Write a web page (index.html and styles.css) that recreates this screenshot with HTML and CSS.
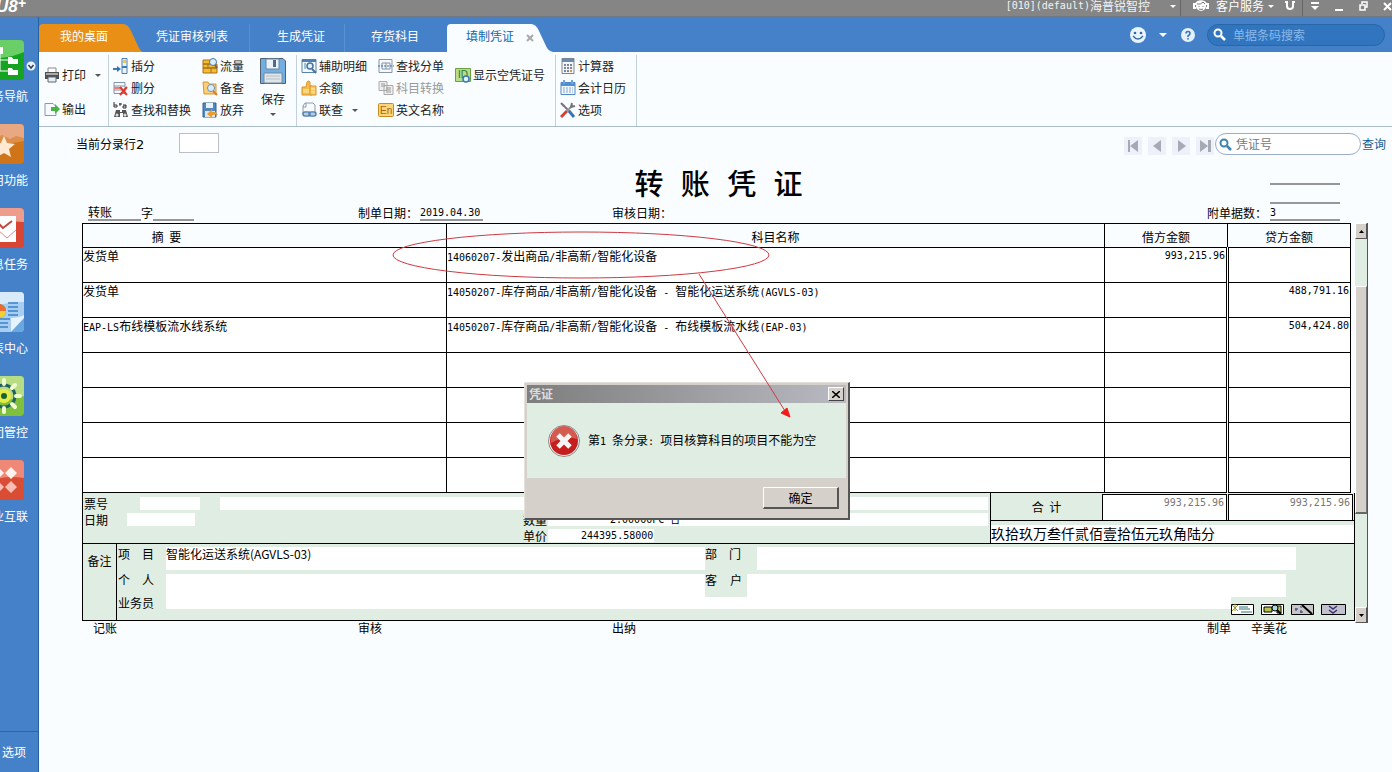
FILE: index.html
```html
<!DOCTYPE html>
<html lang="zh-CN">
<head>
<meta charset="utf-8">
<title>填制凭证</title>
<link rel="stylesheet" href="styles.css">
</head>
<body>
<header class="titlebar">
  <span class="logo">U8<sup>+</sup></span>
  <div class="title-tools">
    <button class="plain account"><span class="m">[010](default)</span>海普锐智控<i class="caret light"></i></button>
    <button class="plain service">
      <svg width="16" height="14" viewBox="0 0 16 14"><path d="M3 6C3 1 13 1 13 6M3 5H1v4h2M13 5h2v4h-2" fill="none" stroke="#fff" stroke-width="2"/><circle cx="8" cy="7" r="5" fill="#fff"/><path d="M4 5q4 1 6-2l2 2M6 7v1M10 7v1M6 10q2 1 4 0" stroke="#777" fill="none"/></svg>
      客户服务<i class="caret light"></i></button>
    <button class="plain magnet" aria-label="工具"><svg width="12" height="12" viewBox="0 0 12 12"><path d="M1 2h3M8 2h3M3 2v4a3 3 0 0 0 6 0V2" fill="none" stroke="#fff" stroke-width="2"/></svg></button>
    <button class="plain win" aria-label="菜单"><svg width="8" height="10" viewBox="0 0 8 10"><path d="M0 1h8v2H0zM0 5h8L4 9z" fill="#fff"/></svg></button>
    <button class="plain win" aria-label="最小化"><svg width="8" height="10" viewBox="0 0 8 10"><path d="M0 8h8v2H0z" fill="#fff"/></svg></button>
    <button class="plain win" aria-label="还原"><svg width="9" height="10" viewBox="0 0 9 10"><path d="M3 3V1h5v5H6M1 4h5v5H1z" fill="none" stroke="#fff" stroke-width="1.5"/></svg></button>
    <button class="plain win last" aria-label="关闭"><svg width="9" height="10" viewBox="0 0 9 10"><path d="M1 2l7 7M8 2L1 9" stroke="#fff" stroke-width="2"/></svg></button>
  </div>
</header>
<div class="shell">
  <nav class="sidebar">
    <div class="side-list">
      <a href="#nav"><svg width="40" height="40" viewBox="0 0 40 40"><rect width="40" height="40" rx="4" fill="#16a321"/><path d="M0 4q0-4 4-4h32q4 0 4 4v8Q22 20 0 18z" fill="#69cf66"/><path d="M16 20h8M16 31h8M16 12v19" stroke="#fff" fill="none"/><path d="M9 7h10v7H9zM24 17h4l1 2h5v5H24zM24 28h4l1 2h5v5H24z" fill="#fff"/></svg>业务导航</a>
      <a href="#fav"><svg width="40" height="40" viewBox="0 0 40 40"><rect width="40" height="40" rx="4" fill="#cf7419"/><path d="M0 4q0-4 4-4h32q4 0 4 4v11l-8-2-6 3-8-4-18 9z" fill="#e9a782"/><path d="M0 22q20-1 40-5v-3l-8-2-6 3-8-4-18 7z" fill="#dc8f4a"/><path d="M20 12l3 7 8 1-6 5 2 8-7-4-7 4 2-8-6-5 8-1z" fill="#ffe9d2"/></svg>常用功能</a>
      <a href="#task"><svg width="40" height="40" viewBox="0 0 40 40"><rect width="40" height="40" rx="4" fill="#d94533"/><path d="M0 4q0-4 4-4h32q4 0 4 4v10Q20 12 0 20z" fill="#ee9c8c"/><path d="M4 8h28v14H4zM14 22h18v12H14z" fill="#fff"/><path d="M15 16l4 4 9-7" fill="none" stroke="#c4473c" stroke-width="2"/><path d="M14 22l9 8 9-8" fill="none" stroke="#d58e88"/></svg>消息任务</a>
      <a href="#report"><svg width="40" height="40" viewBox="0 0 40 40"><rect width="40" height="40" rx="4" fill="#a7cdf0"/><path d="M0 4q0-4 4-4h32q4 0 4 4v6Q20 9 0 18z" fill="#d9ebfb"/><path d="M24 11h10M24 15h10M24 19h10M24 23h10M4 27h22M4 31h20M4 35h20" stroke="#3d83c9" stroke-width="1.5"/><circle cx="15" cy="19" r="7" fill="#4aae4d"/><path d="M15 19v-7a7 7 0 0 1 7 7z" fill="#eb6b31"/><path d="M15 19h7a7 7 0 0 1-7 7z" fill="#f1cf37"/><path d="M27 40V26h13v10q0 4-4 4z" fill="#6ba7df"/><path d="M27 40l13-14v-3q-2 2-13 3z" fill="#e6f2fc"/></svg>报表中心</a>
      <a href="#group"><svg width="40" height="40" viewBox="0 0 40 40"><rect width="40" height="40" rx="4" fill="#7fc13d"/><path d="M0 4q0-4 4-4h32q4 0 4 4v16L0 30z" fill="#b7dc84"/><circle cx="20" cy="20" r="11" fill="none" stroke="#235f5f" stroke-width="3"/><g stroke="#effad0" stroke-width="4" stroke-linecap="round"><path d="M20 4v4M20 32v4M4 20h4M32 20h4M9 9l3 3M28 28l3 3M31 9l-3 3M9 31l3-3"/></g><circle cx="20" cy="20" r="7" fill="#e5ec44"/><circle cx="20" cy="20" r="3" fill="#17643a"/></svg>集团管控</a>
      <a href="#link"><svg width="40" height="40" viewBox="0 0 40 40"><rect width="40" height="40" rx="4" fill="#d94d35"/><path d="M0 4q0-4 4-4h32q4 0 4 4v14Q15 14 0 26z" fill="#ef8877"/><path d="M14 7l6 6-6 6-6-6zM27 7l6 6-6 6-6-6z" fill="#fff1ee"/><path d="M14 21l6 6-6 6-6-6zM27 21l6 6-6 6-6-6z" fill="#f9bdb3"/></svg>企业互联</a>
    </div>
    <button class="plain side-toggle" aria-label="展开"><svg width="10" height="10" viewBox="0 0 10 10"><circle cx="5" cy="5" r="4.5" fill="#eaf2fc"/><path d="M2.500 4L5 7l2.500-3" fill="none" stroke="#245" stroke-width="1.500"/></svg></button>
    <a class="side-options" href="#options">选项</a>
  </nav>
  <main class="main">
    <div class="tabbar">
      <nav class="tabs">
        <a class="tab desk" href="#desk"><svg class="tab-shape" viewBox="0 0 104 28" preserveAspectRatio="none"><path d="M0 28V4q0-4 4-4h80q5 0 8 7l7 15q2 5 5 6z" fill="#e98f15"/></svg><span>我的桌面</span></a>
        <a class="tab audit" href="#audit">凭证审核列表</a>
        <a class="tab make" href="#make">生成凭证</a>
        <a class="tab stock" href="#stock">存货科目</a>
        <a class="tab active" href="#fill"><svg class="tab-shape" viewBox="0 0 106 28" preserveAspectRatio="none"><path d="M0 28V4q0-4 4-4h80q5 0 8 7l7 15q2 5 7 6z" fill="#fafdff"/></svg><span>填制凭证</span><svg class="tab-close" width="8" height="8" viewBox="0 0 8 8"><path d="M1 1l6 6M7 1L1 7" stroke="#a9a9a9" stroke-width="2"/></svg></a>
      </nav>
      <div class="tab-tools">
        <button class="plain" aria-label="表情"><svg width="16" height="16" viewBox="0 0 16 16"><circle cx="8" cy="8" r="8" fill="#e9f5fc"/><circle cx="5" cy="6" r="1.300" fill="#3167a5"/><circle cx="11" cy="6" r="1.300" fill="#3167a5"/><path d="M3 9q5 6 10 0" fill="none" stroke="#3167a5" stroke-width="1.300"/></svg></button>
        <i class="caret big"></i>
        <button class="plain help" aria-label="帮助"><svg width="14" height="14" viewBox="0 0 14 14"><circle cx="7" cy="7" r="7" fill="#e4f0fc"/><path d="M5 5.500q0-2 2-2t2 2q0 1-2 2.500V9M7 10v1.500" fill="none" stroke="#3973b5" stroke-width="1.600"/></svg></button>
        <label class="pill"><svg width="13" height="13" viewBox="0 0 13 13"><circle cx="5" cy="5" r="3.500" fill="none" stroke="#fff" stroke-width="2"/><path d="M8 8l4 4" stroke="#fff" stroke-width="2.500"/></svg><input type="text" placeholder="单据条码搜索" aria-label="单据条码搜索"></label>
      </div>
    </div>
    <div class="ribbon">
      <div class="group g-print">
        <button class="cmd"><svg width="16" height="16" viewBox="0 0 16 16"><path d="M4 1h8v5H4z" fill="#fff" stroke="#888"/><path d="M1 5h14v7H1z" fill="#4e5053"/><path d="M2 6h12v2H2z" fill="#aaa"/><path d="M4 10h8v5H4z" fill="#e5edf8" stroke="#666"/></svg>打印<i class="caret"></i></button>
        <button class="cmd"><svg width="16" height="16" viewBox="0 0 16 16"><path d="M1 2.500h8l3 3v9H1z" fill="#f7fafc" stroke="#8a98a8"/><path d="M7 6h4V3l5 5-5 5v-3H7z" fill="#48b448"/></svg>输出</button>
      </div>
      <div class="group g-edit">
        <div class="stack">
          <button class="cmd"><svg width="16" height="16" viewBox="0 0 16 16"><path d="M9 .5h5v15H9z" fill="#eaf3fb" stroke="#4a7eaf"/><path d="M10 2h3v3h-3z" fill="#f2c04e"/><path d="M9 9h5M0 11h4" stroke="#3c79b6" stroke-width="2"/><path d="M4 8l4 3-4 3z" fill="#2e74bb"/></svg>插分</button>
          <button class="cmd"><svg width="16" height="16" viewBox="0 0 16 16"><path d="M1 2.500h11v11H1zM1 6h11M1 10h11" fill="#f5f8fb" stroke="#8195ab"/><path d="M1 7h8v2H1z" fill="#e88072"/><path d="M7 7l7 8M14 7l-7 8" stroke="#df392f" stroke-width="2"/></svg>删分</button>
          <button class="cmd"><svg width="16" height="16" viewBox="0 0 16 16"><path d="M1 0v5h3V3H1M10 3h3v3h-3V4h3M6 2h3M7 1v3" fill="none" stroke="#333"/><path d="M3 8h4v2h2V8h4l2 7h-5v-4H7v4H1z" fill="#555"/><circle cx="4" cy="13" r="1.500" fill="#ddd"/><circle cx="12" cy="13" r="1.500" fill="#ddd"/></svg>查找和替换</button>
        </div>
        <div class="stack second">
          <button class="cmd"><svg width="16" height="16" viewBox="0 0 16 16"><path d="M1 2h7v4H1zM1 6h14v4H1zM1 10h14v5H1zM6 6v4M9 10v5" fill="#f4bc31" stroke="#a56e18"/><circle cx="11" cy="4" r="3.500" fill="#d9efff" stroke="#51769b"/><path d="M13 7l2 3" stroke="#666" stroke-width="2"/></svg>流量</button>
          <button class="cmd"><svg width="16" height="16" viewBox="0 0 16 16"><path d="M1 2h5l1 2h7v10H2z" fill="#f9cf78" stroke="#d99632"/><circle cx="9" cy="8" r="3.500" fill="#dceefc" stroke="#6991bd"/><path d="M11 11l4 4" stroke="#db7d28" stroke-width="2"/></svg>备查</button>
          <button class="cmd"><svg width="16" height="16" viewBox="0 0 16 16"><path d="M1 1h13v14H1z" fill="#5287c0" stroke="#346294"/><path d="M4 1h7v5H4z" fill="#eaf1f8"/><path d="M3 9h10v6H3z" fill="#dce7f2"/><path d="M16 13q-2-4-6-3V7l-5 5 5 4v-3q4-1 6 0z" fill="#ed9c29"/></svg>放弃</button>
        </div>
        <button class="save"><svg width="28" height="28" viewBox="0 0 28 28"><path d="M1.500 1.500H24l2.500 2.500v22.500h-25z" fill="#72aee0" stroke="#50606f"/><path d="M7 2h13v10H7z" fill="#edf2f6" stroke="#6787a8"/><path d="M14 3h3v7h-3z" fill="#4c6c8b"/><path d="M5 16h18v10H5z" fill="#e0e5ea" stroke="#75899e"/><path d="M7 19h14M7 22h14" stroke="#b6bfc8"/></svg>保存<i class="caret"></i></button>
      </div>
      <div class="group g-query">
        <div class="stack">
          <button class="cmd"><svg width="16" height="16" viewBox="0 0 16 16"><path d="M1 1.500h14v13H1z" fill="#f4f8fc" stroke="#5b82aa"/><path d="M1 1h14v3H1z" fill="#4c81b8"/><path d="M3 6h2M3 8h2M3 10h2" stroke="#58a"/><circle cx="9" cy="8" r="3" fill="#def" stroke="#47739e" stroke-width="1.500"/><path d="M11 11l4 4" stroke="#47739e" stroke-width="2"/></svg>辅助明细</button>
          <button class="cmd"><svg width="16" height="16" viewBox="0 0 16 16"><path d="M6 2q2-2 3 0v4h2v9H1V7h4z" fill="#f5bd47" stroke="#dc9428"/><path d="M9 6h6v9H9z" fill="#fac85c" stroke="#dc9428"/><path d="M2 10h6M2 12h6M10 9h4M10 12h4" stroke="#fff0ba"/></svg>余额</button>
          <button class="cmd"><svg width="16" height="16" viewBox="0 0 16 16"><path d="M4 1h8l2 2v9H2V4z" fill="#f8fafb" stroke="#8b9cac"/><path d="M5 1v4H2" fill="none" stroke="#8b9cac"/><rect x="2" y="10" width="7" height="4" rx="2" fill="none" stroke="#4f83b7" stroke-width="1.500"/><rect x="8" y="10" width="7" height="4" rx="2" fill="none" stroke="#4f83b7" stroke-width="1.500"/></svg>联查<i class="caret"></i></button>
        </div>
        <div class="stack third">
          <button class="cmd"><svg width="16" height="16" viewBox="0 0 16 16"><path d="M1 1.500h13v13H1z" fill="#f6f8fa" stroke="#8797a7"/><path d="M4 5h8v6H4zM8 5v6" fill="none" stroke="#8394a5"/><path d="M0 8h16" stroke="#3873ab" stroke-dasharray="2 1"/></svg>查找分单</button>
          <button class="cmd" disabled><svg width="16" height="16" viewBox="0 0 16 16"><path d="M1 1.500h8v9H1zM6 5.500h9v9H6z" fill="#eee" stroke="#aaa"/><path d="M3 4h4M3 6h4M8 8h5M8 10h5M8 12h5" stroke="#999"/></svg>科目转换</button>
          <button class="cmd"><svg width="16" height="16" viewBox="0 0 16 16"><rect x=".5" y="1.500" width="15" height="13" rx="1" fill="#f9d678" stroke="#ca8a24"/><text x="2" y="12" class="en">En</text></svg>英文名称</button>
        </div>
        <button class="cmd number"><svg width="16" height="16" viewBox="0 0 16 16"><path d="M.5 1.500h15v13H.5z" fill="#b5df88" stroke="#67a346"/><text x="3" y="11" class="id">ID</text><circle cx="11" cy="12" r="3" fill="#e5f4ff" stroke="#367ab4" stroke-width="1.500"/></svg>显示空凭证号</button>
      </div>
      <div class="group g-tools">
        <div class="stack">
          <button class="cmd"><svg width="16" height="16" viewBox="0 0 16 16"><path d="M2 .5h12v15H2z" fill="#f4f5f6" stroke="#7b858f"/><path d="M2 1h12v3H2z" fill="#648cb4"/><path d="M4 7h2M7 7h2M10 7h2M4 10h2M7 10h2M10 10h2M4 13h2M7 13h2" stroke="#788797" stroke-width="2"/><path d="M10 13h2" stroke="#e78f3c" stroke-width="2"/></svg>计算器</button>
          <button class="cmd"><svg width="16" height="16" viewBox="0 0 16 16"><path d="M1 2.500h14v12H1z" fill="#f3f8fd" stroke="#5089c3"/><path d="M1 3h14v3H1z" fill="#4c90d5"/><path d="M4 0v4M12 0v4" stroke="#6aa6df" stroke-width="2"/><path d="M3 8h10M3 10h10M3 12h10" stroke="#81a9ce" stroke-dasharray="2 1"/></svg>会计日历</button>
          <button class="cmd"><svg width="16" height="16" viewBox="0 0 16 16"><path d="M3 3l7 7" stroke="#777" stroke-width="2"/><path d="M9 9l5 6" stroke="#3677b4" stroke-width="3"/><path d="M13 3L7 9" stroke="#999" stroke-width="2"/><path d="M7 9l-6 6" stroke="#cf4235" stroke-width="3"/><path d="M1 1l3 3M12 1l-1 4 4-1" stroke="#777" stroke-width="2" fill="none"/></svg>选项</button>
        </div>
      </div>
    </div>
    <section class="work">
      <div class="finder">
        <label for="line">当前分录行<span class="line-no">2</span></label>
        <input id="line" class="line-box" type="text">
        <div class="pager">
          <button aria-label="首张"><svg width="14" height="12" viewBox="0 0 14 12"><path d="M2 0h2v12H2zM12 0v12L4 6z" fill="#a6aab4"/></svg></button>
          <button aria-label="上张"><svg width="14" height="12" viewBox="0 0 14 12"><path d="M11 0v12L3 6z" fill="#a6aab4"/></svg></button>
          <button aria-label="下张"><svg width="14" height="12" viewBox="0 0 14 12"><path d="M4 0v12l8-6z" fill="#a6aab4"/></svg></button>
          <button aria-label="末张"><svg width="14" height="12" viewBox="0 0 14 12"><path d="M10 0h3v12h-3zM2 0v12l8-6z" fill="#a6aab4"/></svg></button>
        </div>
        <div class="find"><svg width="13" height="13" viewBox="0 0 13 13"><circle cx="5" cy="5" r="3.500" fill="none" stroke="#3f84ad" stroke-width="2"/><path d="M8 8l4 4" stroke="#3f84ad" stroke-width="2.500"/></svg><input type="text" placeholder="凭证号" aria-label="凭证号"></div>
        <a class="go" href="#find">查询</a>
      </div>
      <div class="heading">
        <h1>转 账 凭 证</h1>
        <div class="rules"><span></span><span></span></div>
      </div>
      <div class="meta">
        <div class="word"><input value="转账" aria-label="凭证字">字<input class="no" aria-label="凭证编号"></div>
        <label>制单日期：<input class="date m" value="2019.04.30"></label>
        <span>审核日期：</span>
        <label>附单据数：<input class="count m" value="3"></label>
      </div>
      <div class="voucher">
        <div class="sheet">
          <table>
            <colgroup><col class="c-sum"><col><col class="c-amt"><col class="c-amt"></colgroup>
            <thead><tr><th class="sum">摘&nbsp; 要</th><th>科目名称</th><th>借方金额</th><th>贷方金额</th></tr></thead>
            <tbody>
              <tr><td>发货单</td><td><span class="m">14060207-</span>发出商品<span class="m">/</span>非高新<span class="m">/</span>智能化设备</td><td class="m amt">993,215.96</td><td></td></tr>
              <tr><td>发货单</td><td><span class="m">14050207-</span>库存商品<span class="m">/</span>非高新<span class="m">/</span>智能化设备<span class="m"> - </span>智能化运送系统<span class="m">(AGVLS-03)</span></td><td></td><td class="m amt">488,791.16</td></tr>
              <tr><td><span class="m">EAP-LS</span>布线模板流水线系统</td><td><span class="m">14050207-</span>库存商品<span class="m">/</span>非高新<span class="m">/</span>智能化设备<span class="m"> - </span>布线模板流水线<span class="m">(EAP-03)</span></td><td></td><td class="m amt">504,424.80</td></tr>
              <tr><td></td><td></td><td></td><td></td></tr>
              <tr><td></td><td></td><td></td><td></td></tr>
              <tr><td></td><td></td><td></td><td></td></tr>
              <tr><td></td><td></td><td></td><td></td></tr>
            </tbody>
          </table>
          <div class="foot">
            <div class="detail">
              <div class="d-row"><label for="bill">票号</label><input id="bill" class="bill"><input class="wide" aria-label="票据说明"></div>
              <div class="d-row"><label for="day">日期</label><input id="day" class="day"><label class="qty-label" for="qty">数量</label><input id="qty" class="qty wide m" value="2.00000PC 台"></div>
              <div class="d-row"><label class="price-label" for="price">单价</label><input id="price" class="price m" value="244395.58000"></div>
            </div>
            <div class="totals">
              <div class="total-row"><span class="total-label">合&nbsp; 计</span><output class="m">993,215.96</output><output class="m">993,215.96</output></div>
              <div class="words">玖拾玖万叁仟贰佰壹拾伍元玖角陆分</div>
            </div>
          </div>
          <div class="notes">
            <div class="notes-title">备注</div>
            <div class="notes-body">
              <div class="n-row top"><label for="proj">项<span>目</span></label><input id="proj" value="智能化运送系统(AGVLS-03)"><label class="dept" for="dept">部<span>门</span></label><input id="dept"></div>
              <div class="n-row mid"><label for="person">个<span>人</span></label><input id="person"><label class="cust" for="cust">客<span>户</span></label><input id="cust"></div>
              <div class="n-row end"><label for="sales">业务员</label><input id="sales">
                <div class="mini">
                  <button aria-label="单据"><svg width="23" height="11" viewBox="0 0 23 11"><path d="M.5.5h22v10H.5z" fill="#fff" stroke="#000"/><path d="M8 3h9M8 5h11M10 8h11" stroke="#287575"/><path d="M1 1l6 6M7 1L1 7M4 0v7" stroke="#a79534"/></svg></button>
                  <button aria-label="查看"><svg width="23" height="11" viewBox="0 0 23 11"><path d="M.5.5h22v10H.5z" fill="#fff" stroke="#000"/><path d="M3 3h8v5H3zM16 2h4v7h-4z" fill="#b6c447" stroke="#000"/><circle cx="14" cy="4" r="3" fill="#a7d9e4" stroke="#000"/><path d="M16 6l4 4" stroke="#000" stroke-width="2"/></svg></button>
                  <button aria-label="编辑"><svg width="23" height="11" viewBox="0 0 23 11"><path d="M.5.5h22v10H.5z" fill="#c9c5c7" stroke="#000"/><path d="M11 1l10 9" stroke="#000" stroke-width="2"/><path d="M4 5h3M5 4v3M9 8h3M10 6v3M9 3h2" stroke="#347"/></svg></button>
                  <button aria-label="展开"><svg width="25" height="11" viewBox="0 0 25 11"><path d="M.5.5h24v10H.5z" fill="#c4c1cf" stroke="#000"/><path d="M8 2l4 3 4-3M8 6l4 3 4-3" fill="none" stroke="#36366e" stroke-width="1.500"/></svg></button>
                </div>
              </div>
            </div>
          </div>
        </div>
        <div class="scroll">
          <button aria-label="向上"><svg width="5" height="3" viewBox="0 0 5 3"><path d="M0 3L2.500 0 5 3z"/></svg></button>
          <div class="track"><div class="thumb"></div></div>
          <button aria-label="向下"><svg width="5" height="3" viewBox="0 0 5 3"><path d="M0 0l2.500 3L5 0z"/></svg></button>
        </div>
        <div class="dialog" role="alertdialog" aria-labelledby="dlg">
          <div class="dlg-bar"><span id="dlg">凭证</span><button aria-label="关闭"><svg width="8" height="7" viewBox="0 0 8 7"><path d="M0 0l8 7M8 0L0 7" stroke="#000" stroke-width="1.500"/></svg></button></div>
          <div class="dlg-body">
            <svg width="32" height="32" viewBox="0 0 32 32"><circle cx="16" cy="16" r="15.500" fill="#f7f7f7" stroke="#888"/><circle cx="16" cy="16" r="14" fill="#c51e1d"/><path d="M3 14a13 13 0 0 1 26 0Q16 10 3 18z" fill="#d55a50"/><path d="M10 10l12 12M22 10L10 22" stroke="#f5f5f5" stroke-width="5"/></svg>
            <span>第<span class="m">1 </span>条分录<span class="m">: </span>项目核算科目的项目不能为空</span>
          </div>
          <div class="dlg-foot"><button>确定</button></div>
        </div>
        <svg class="mark" width="400" height="200" viewBox="0 0 400 200"><ellipse cx="190" cy="25" rx="188" ry="23" fill="none" stroke="#ce3a41"/><path d="M308 44l86 137" stroke="#ce3a41"/><path d="M399 187l-9-4 6-5z" fill="#f01c1c" stroke="#f01c1c"/></svg>
      </div>
      <div class="signs"><span class="book">记账</span><span>审核</span><span>出纳</span><span class="maker">制单<span>辛美花</span></span></div>
    </section>
  </main>
</div>
</body>
</html>
```
FILE: styles.css
```css
* { box-sizing: border-box; }
body {
  margin: 0;
  min-height: 100vh;
  display: flex;
  flex-direction: column;
  overflow: hidden;
  font: 12px/16px "Noto Sans CJK SC", sans-serif;
  color: #000;
  background: #fafdff;
}
button, input { font: inherit; color: inherit; padding: 0; border: 0; border-radius: 0; background: none; min-width: 0; }
a { color: inherit; text-decoration: none; }
svg { display: block; flex: none; }
.m { font-family: "DejaVu Sans Mono", "Noto Sans CJK SC", monospace; font-size: 10px; white-space: pre; }
.caret { width: 0; height: 0; border: 3px solid transparent; border-top-color: #555; border-bottom: 0; }
.caret.light { border-top-color: #fff; }
.caret.big { border: 4px solid transparent; border-top-color: #fff; border-bottom: 0; }
.plain { display: flex; align-items: center; }

/* window title */
.titlebar { display: flex; justify-content: space-between; height: 17px; flex: none; overflow: hidden; background: #858585; border-bottom: 1px solid #6d7884; color: #fff; }
.logo { font: italic bold 17px/14px "Liberation Sans", sans-serif; margin-left: -4px; }
.logo sup { font-size: 14px; line-height: 1px; vertical-align: 4px; }
.title-tools { display: flex; line-height: 12px; }
.title-tools button { height: 12px; }
.account { color: #f4f4f4; }
.account .caret { margin-left: 20px; }
.title-tools .service { margin-left: 4px; padding-left: 12px; gap: 7px; height: 17px; padding-bottom: 5px; border-left: 1px solid #666; }
.service .caret { margin-left: -3px; }
.title-tools .magnet { margin-left: 10px; padding-right: 6px; height: 17px; padding-bottom: 5px; border-right: 1px solid #666; }
.win { margin-left: 8px; width: 16px; }
.win.last { width: 9px; margin-left: 8px; }

.shell { display: flex; flex: 1; }
.sidebar { position: relative; display: flex; flex-direction: column; justify-content: space-between; width: 39px; flex: none; overflow: hidden; background: #4581c9; border-right: 1px solid #2461a2; color: #fff; }
.side-list { display: flex; flex-direction: column; gap: 20px; width: 48px; margin: 23px 0 0 -21px; }
.side-list a { display: flex; flex-direction: column; align-items: center; gap: 8px; margin-right: -2px; white-space: nowrap; }
.side-toggle { position: absolute; left: 26px; top: 44px; }
.side-options { height: 41px; padding: 12px 2px; border-top: 1px solid #2f659f; }

.main { flex: 1; min-width: 0; }
.tabbar { display: flex; justify-content: space-between; height: 35px; padding-top: 7px; background: #4581c9; color: #fff; }
.tabs { display: flex; height: 28px; line-height: 24px; }
.tab { position: relative; white-space: nowrap; }
.tab-shape { position: absolute; left: 0; top: 0; width: 100%; height: 100%; }
.tab > span { position: relative; }
.desk { padding: 0 35px 0 21px; }
.audit { padding: 0 21px 0 13px; border-right: 1px solid #5990d2; }
.make { padding: 0 19px 0 27px; border-right: 1px solid #5990d2; }
.stock { padding: 0 28px 0 26px; }
.active { display: flex; align-items: center; gap: 12px; padding: 0 19px; color: #1766ab; }
.active > span { align-self: flex-start; }
.tab-close { position: relative; }
.tab-tools { display: flex; align-items: center; height: 21px; padding-right: 7px; }
.tab-tools .big { margin: 0 14px 0 13px; }
.help { margin-right: 12px; }
.pill { display: flex; align-items: center; gap: 7px; width: 178px; height: 22px; padding: 0 6px 0 5px; border-radius: 11px; background: #3275bf; border: 1px solid #2866a8; }
.pill input { flex: 1; }
.pill input::placeholder { color: #8ab9e9; opacity: 1; }

/* ribbon */
.ribbon { display: flex; height: 75px; border-bottom: 1px solid #a9bacb; padding-top: 3px; }
.group { display: flex; border-right: 1px solid #c3d0dd; padding-left: 4px; }
.cmd { display: flex; align-items: center; gap: 2px; height: 22px; white-space: nowrap; color: #222; }
.cmd:disabled { color: #999; }
.stack { display: flex; flex-direction: column; }
.g-print { flex-direction: column; gap: 12px; width: 70px; padding: 9px 0 0 5px; }
.g-print .caret { margin-left: 7px; }
.g-edit { width: 188px; }
.second { margin-left: 11px; }
.save { display: flex; flex-direction: column; align-items: center; gap: 6px; margin: 2px 0 0 15px; height: 61px; color: #222; }
.g-query { width: 259px; }
.g-query .caret { margin-left: 7px; }
.third { margin-left: 11px; }
.number { margin: 9px 0 0 11px; }
.g-tools { width: 81px; }
.en, .id { font: 10px "Liberation Sans", sans-serif; fill: #a96318; }
.id { fill: #35743a; }

/* voucher search */
.work { padding: 0 24px 0 43px; }
.finder { display: flex; align-items: center; height: 34px; margin: 0 -20px 0 -6px; padding-right: 2px; }
.line-no { font: 13px "DejaVu Sans", sans-serif; }
.line-box { width: 40px; height: 20px; margin: 0 auto 2px 35px; background: #fff; border: 1px solid #b9c0c7; }
.pager { display: flex; gap: 6px; margin-right: 1px; }
.pager button { display: grid; place-items: center; width: 18px; height: 18px; margin-top: 3px; background: #eff1fa; }
.find { display: flex; align-items: center; gap: 4px; width: 146px; height: 22px; padding-left: 3px; border: 1px solid #9aaecb; border-radius: 11px; background: #fff; }
.find input { width: 110px; }
.find input::placeholder { color: #777; opacity: 1; }
.go { margin-left: 1px; color: #145c93; }

.heading { display: grid; grid-template-columns: 1fr auto 1fr; height: 43px; margin-right: 13px; }
h1 { grid-column: 2; margin: 0; font: 500 29px/54px "Liberation Mono", "Noto Sans CJK SC", sans-serif; }
.rules { justify-self: end; display: flex; flex-direction: column; gap: 17px; margin: 22px 15px 0 0; }
.rules span { width: 70px; height: 2px; background: #979797; }
.meta, .signs { display: grid; grid-template-columns: 270px 254px 1fr 148px; margin-right: 13px; padding-left: 6px; }
.meta { height: 19px; line-height: 18px; white-space: nowrap; }
.meta input { height: 17px; border-bottom: 2px solid #979797; padding-top: 1px; }
.word { display: flex; }
.word input { width: 53px; }
.word .no { width: 41px; }
.meta label { display: flex; }
.meta .date { width: 63px; margin-left: 2px; padding-top: 2px; }
.meta .count { width: 70px; margin-left: 3px; padding-top: 2px; }

.voucher { position: relative; display: flex; }
.sheet { flex: 1; min-width: 0; }
table { width: calc(100% - 4px); table-layout: fixed; border-collapse: collapse; }
.c-sum { width: 364px; }
.c-amt { width: 123px; }
th, td { border: 1px solid #000; white-space: nowrap; }
th { height: 24px; padding: 3px 0 0; line-height: 18px; font-weight: 400; }
.sum { padding-right: 196px; }
td { height: 35px; padding: 0 1px 0 0; vertical-align: top; background: #fff; line-height: 15px; }
td:last-child { border-left: 3px double #000; }
.amt { text-align: right; }

.foot { display: flex; height: 50px; background: #e0ede2; border: solid #000; border-width: 0 1px; }
.detail { flex: 1; display: flex; flex-direction: column; gap: 1px; padding: 3px 2px 0 1px; }
.d-row { display: flex; align-items: center; height: 15px; }
.d-row input { height: 13px; background: #fff; }
.bill { width: 60px; margin: 0 20px 0 32px; }
.day { width: 68px; margin-left: 19px; }
.wide { flex: 1; }
.qty-label { margin-left: 328px; }
.qty { padding-left: 62px; margin-left: 1px; }
.price-label { margin-left: 439px; }
.price { width: 106px; padding-left: 33px; margin-left: 1px; }
.totals { width: 364px; border-left: 1px solid #000; }
.total-row { display: flex; height: 28px; border-bottom: 1px solid #000; padding: 1px 1px 0 0; }
.total-label { width: 111px; text-align: center; line-height: 26px; }
.total-row output { flex: 1; border: 1px solid #000; border-bottom: 0; background: #fff; color: #777; text-align: right; line-height: 16px; padding-right: 2px; }
.total-row output + output { margin-left: 1px; }
.words { margin-top: 4px; height: 18px; background: #fff; font-size: 14px; line-height: 17px; }
.notes { display: flex; height: 78px; border: 1px solid #000; background: #e0ede2; }
.notes-title { width: 34px; border-right: 1px solid #000; padding-top: 9px; text-align: center; }
.notes-body { flex: 1; padding: 3px 8px 0 1px; }
.n-row { display: flex; }
.n-row label { width: 48px; flex: none; }
.n-row label span { margin-left: 12px; }
.n-row input { flex: 1; background: #fff; }
.top { height: 23px; margin-bottom: 4px; padding-right: 50px; }
.top label { margin-top: -1px; }
.top input { padding-bottom: 10px; }
.n-row .dept { width: 52px; }
.mid { height: 23px; padding-right: 60px; }
.mid label { margin-top: -2px; }
.n-row .cust { width: 42px; }
.n-row .cust span { margin-left: 13px; }
.end { height: 24px; }
.end label { margin-top: -2px; }
.end > input { height: 12px; }
.mini { display: flex; gap: 7px; padding-top: 7px; }
.mini button { height: 11px; }

.scroll { width: 13px; display: flex; flex-direction: column; margin-bottom: -2px; background: #e0ede2; border-right: 1px solid #555; }
.scroll button { display: grid; place-items: center; height: 16px; background: #d5d1ca; border: 1px solid #fff; border-color: #fff #555 #555 #fff; }
.track { flex: 1; padding-top: 47px; }
.thumb { height: 228px; background: #d5d1ca; border: 1px solid #fff; border-right-color: #777; border-bottom: 2px solid #666; }
.signs { line-height: 14px; }
.book { padding-left: 5px; }
.maker span { margin-left: 20px; }

/* message over the voucher */
.dialog { position: absolute; left: 442px; top: 159px; width: 326px; padding: 2px; background: #d5d1ca; border: 1px solid #e5e2de; border-right: 2px solid #555; border-bottom: 2px solid #555; }
.dlg-bar { display: flex; justify-content: space-between; align-items: center; height: 18px; padding: 0 2px; color: #ddd; font-weight: 700; background: linear-gradient(90deg, #7e7e7e, #b9bac2); }
.dlg-bar button { display: grid; place-items: center; width: 16px; height: 14px; background: #d5d1ca; border: 1px solid #fff; border-right-color: #444; border-bottom-color: #444; }
.dlg-body { display: flex; align-items: center; gap: 8px; height: 75px; padding-left: 21px; background: #e0ede2; }
.dlg-foot { display: flex; justify-content: flex-end; padding: 9px 7px; height: 38px; }
.dlg-foot button { width: 76px; height: 22px; background: #d5d1ca; border: 1px solid #fff; border-right: 2px solid #555; border-bottom: 2px solid #555; }
.mark { position: absolute; left: 309px; top: 7px; pointer-events: none; }
```
